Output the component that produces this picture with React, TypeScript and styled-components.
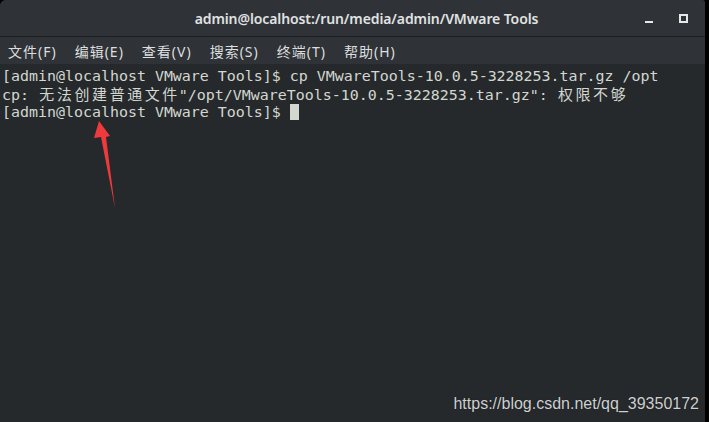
import React from "react";
import styled, { createGlobalStyle } from "styled-components";

const Global = createGlobalStyle`
  html, body {
    margin: 0;
    padding: 0;
    background: #000;
  }
`;

const Screen = styled.div`
  position: relative;
  width: 709px;
  height: 422px;
  display: flex;
  background: #000;
  overflow: hidden;
`;

const Window = styled.div`
  width: 705px;
  height: 422px;
  display: flex;
  flex-direction: column;
  background: #25292c;
  border-top-left-radius: 6px;
  border-top-right-radius: 3px;
  overflow: hidden;
`;

const TitleBar = styled.div`
  height: 36px;
  flex-shrink: 0;
  display: grid;
  grid-template-columns: 1fr auto 1fr;
  align-items: center;
  background: #2f3337;
  border-bottom: 1px solid #1c1e20;
`;

const Title = styled.div`
  grid-column: 2;
  font-family: "Noto Sans", "Open Sans", sans-serif;
  font-size: 14px;
  font-weight: 600;
  color: #e0e2e3;
  letter-spacing: -0.1px;
  padding-left: 28px;
`;

const Controls = styled.div`
  grid-column: 3;
  justify-self: end;
  display: flex;
  align-items: center;
  gap: 26px;
  padding-right: 17px;
`;

const Minimize = styled.div`
  width: 8px;
  height: 2px;
  margin-top: 8px;
  background: #e8e8e8;
`;

const Maximize = styled.div`
  width: 5px;
  height: 5px;
  border: 2px solid #e8e8e8;
`;

const MenuBar = styled.div`
  height: 27px;
  flex-shrink: 0;
  display: flex;
  align-items: center;
  gap: 18px;
  padding-left: 8px;
  background: #2f3337;
  border-bottom: 1px solid #26292c;
`;

const MenuItem = styled.span`
  font-family: "Noto Sans", "Noto Sans CJK SC", sans-serif;
  font-size: 14px;
  letter-spacing: 1px;
  color: #dcdedf;
`;

const Terminal = styled.div`
  flex: 1;
  padding: 2px 0 0 2px;
  font-family: "DejaVu Sans Mono", "Noto Sans CJK SC", monospace;
  font-size: 14.95px;
  line-height: 18px;
  color: #d3d7cf;
  white-space: pre;
`;

const Line = styled.div`
  height: 18px;
`;

const Wide = styled.span`
  display: inline-block;
  width: calc(2ch + 1px);
  text-align: center;
  font-family: "Noto Sans CJK SC", sans-serif;
`;

const Cursor = styled.span`
  display: inline-block;
  width: 9px;
  height: 16px;
  vertical-align: -3px;
  background: #d3d7cf;
`;

const Arrow = styled.svg`
  position: absolute;
  left: 0;
  top: 0;
  pointer-events: none;
`;

const Watermark = styled.div`
  position: absolute;
  right: 10px;
  bottom: 9px;
  font-family: "Liberation Sans", Arial, sans-serif;
  font-size: 16px;
  color: #cfd0d1;
  text-shadow: 0 0 1px rgba(0, 0, 0, 0.6);
`;

const wide = (s: string) =>
  Array.from(s).map((c, i) =>
    /[\u4e00-\u9fff]/.test(c) ? <Wide key={i}>{c}</Wide> : c
  );

const prompt = "[admin@localhost VMware Tools]$ ";
const menus = ["文件(F)", "编辑(E)", "查看(V)", "搜索(S)", "终端(T)", "帮助(H)"];

const App: React.FC = () => {
  return (
    <Screen>
      <Global />
      <Window>
        <TitleBar>
          <Title>admin@localhost:/run/media/admin/VMware Tools</Title>
          <Controls>
            <Minimize />
            <Maximize />
          </Controls>
        </TitleBar>
        <MenuBar>
          {menus.map((m) => (
            <MenuItem key={m}>{m}</MenuItem>
          ))}
        </MenuBar>
        <Terminal>
          <Line>{prompt}cp VMwareTools-10.0.5-3228253.tar.gz /opt</Line>
          <Line>
            {wide('cp: 无法创建普通文件"/opt/VMwareTools-10.0.5-3228253.tar.gz": 权限不够')}
          </Line>
          <Line>
            {prompt}
            <Cursor />
          </Line>
        </Terminal>
      </Window>
      <Arrow width="709" height="422" viewBox="0 0 709 422">
        <polygon
          points="99,121 110,136 106,137 115,208 101,137 94,138"
          fill="#ee3a3c"
        />
      </Arrow>
      <Watermark>https://blog.csdn.net/qq_39350172</Watermark>
    </Screen>
  );
};

export default App;
